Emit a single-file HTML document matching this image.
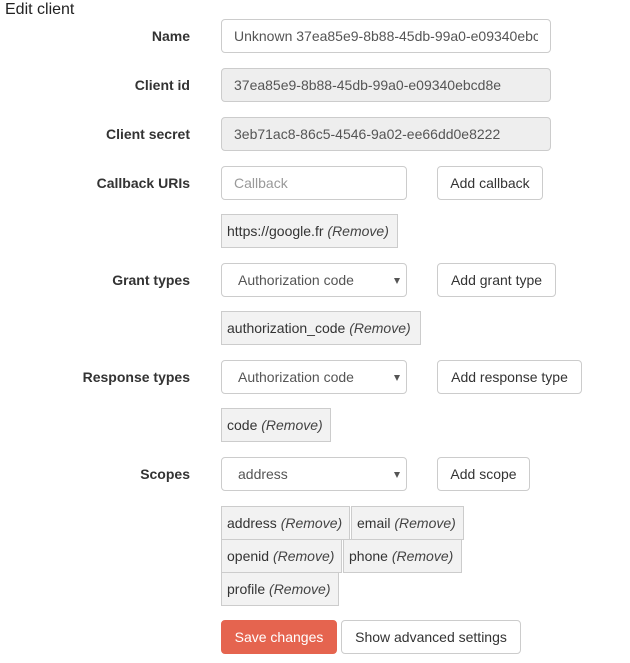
<!DOCTYPE html>
<html><head><meta charset="utf-8"><style>
body{margin:0;width:630px;height:663px;background:#fff;font-family:"Liberation Sans",sans-serif;font-size:14px;color:#333;position:relative;overflow:hidden}
.a{position:absolute;box-sizing:border-box}
.t{left:5px;top:1px;font-size:16px;color:#222}
.l{left:0;width:190px;text-align:right;font-weight:bold;line-height:34px;color:#333}
.in{height:34px;border:1px solid #ccc;border-radius:4px;padding:0 12px;line-height:32px;white-space:nowrap;overflow:hidden;color:#555;background:#fff}
.in span{display:block;overflow:hidden}
.dis{background:#eee}
.sel{padding-left:16px}
.sel:after{content:"";position:absolute;right:6px;top:14px;border-left:3px solid transparent;border-right:3px solid transparent;border-top:6px solid #555}
.btn{height:34px;border:1px solid #ccc;border-radius:4px;line-height:32px;text-align:center;color:#333;background:#fff}
.tag{height:34px;border:1px solid #ccc;background:#f2f2f2;padding:0 5px;line-height:32px;white-space:nowrap}
.tag i{color:#444}
.save{background:#e5644f;border-color:#e5644f;color:#fff}
</style></head><body>
<div class="a t">Edit client</div>

<div class="a l" style="top:19px">Name</div>
<div class="a in" style="left:221px;top:19px;width:330px"><span>Unknown 37ea85e9-8b88-45db-99a0-e09340ebcd8e</span></div>

<div class="a l" style="top:68px">Client id</div>
<div class="a in dis" style="left:221px;top:68px;width:330px">37ea85e9-8b88-45db-99a0-e09340ebcd8e</div>

<div class="a l" style="top:117px">Client secret</div>
<div class="a in dis" style="left:221px;top:117px;width:330px">3eb71ac8-86c5-4546-9a02-ee66dd0e8222</div>

<div class="a l" style="top:166px">Callback URIs</div>
<div class="a in" style="left:221px;top:166px;width:186px;color:#999">Callback</div>
<div class="a btn" style="left:437px;top:166px;width:106px">Add callback</div>
<div class="a tag" style="left:221px;top:214px;width:177px">https://google.fr <i>(Remove)</i></div>

<div class="a l" style="top:263px">Grant types</div>
<div class="a in sel" style="left:221px;top:263px;width:186px">Authorization code</div>
<div class="a btn" style="left:437px;top:263px;width:119px">Add grant type</div>
<div class="a tag" style="left:221px;top:311px;width:200px">authorization_code <i>(Remove)</i></div>

<div class="a l" style="top:360px">Response types</div>
<div class="a in sel" style="left:221px;top:360px;width:186px">Authorization code</div>
<div class="a btn" style="left:437px;top:360px;width:145px">Add response type</div>
<div class="a tag" style="left:221px;top:408px;width:110px">code <i>(Remove)</i></div>

<div class="a l" style="top:457px">Scopes</div>
<div class="a in sel" style="left:221px;top:457px;width:186px">address</div>
<div class="a btn" style="left:437px;top:457px;width:93px">Add scope</div>
<div class="a tag" style="left:221px;top:506px;width:129px">address <i>(Remove)</i></div>
<div class="a tag" style="left:351px;top:506px;width:113px">email <i>(Remove)</i></div>
<div class="a tag" style="left:221px;top:539px;width:121px">openid <i>(Remove)</i></div>
<div class="a tag" style="left:343px;top:539px;width:119px">phone <i>(Remove)</i></div>
<div class="a tag" style="left:221px;top:572px;width:118px">profile <i>(Remove)</i></div>

<div class="a btn save" style="left:221px;top:620px;width:116px">Save changes</div>
<div class="a btn" style="left:341px;top:620px;width:180px">Show advanced settings</div>
</body></html>
